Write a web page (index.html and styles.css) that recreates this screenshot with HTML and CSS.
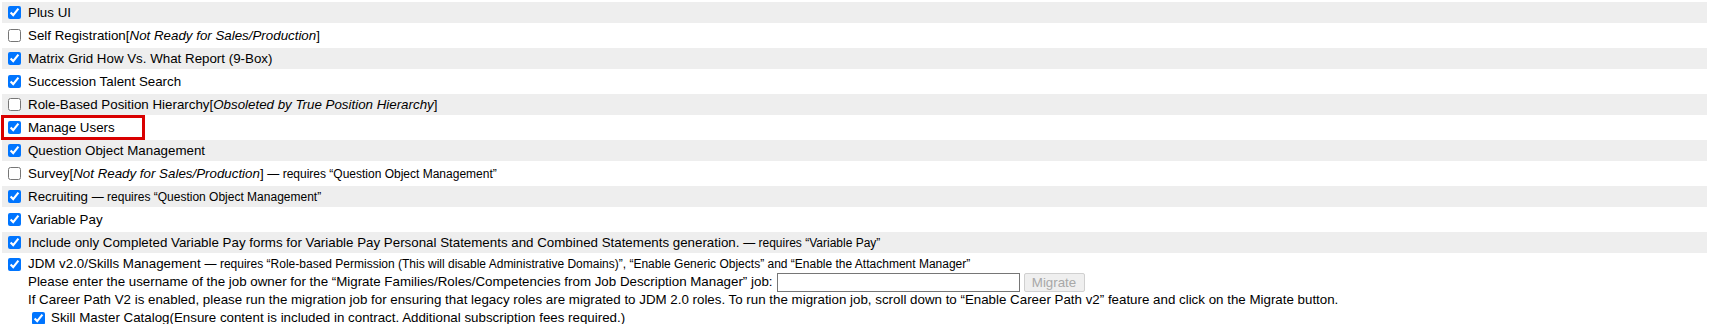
FILE: index.html
```html
<!DOCTYPE html>
<html lang="en">
<head>
<meta charset="utf-8">
<title>Feature settings</title>
<link rel="stylesheet" href="styles.css">
</head>
<body>
<table class="features">
  <tr class="alt"><td><label class="row"><input type="checkbox" checked><span>Plus UI</span></label></td></tr>
  <tr><td><label class="row"><input type="checkbox"><span>Self Registration[<i>Not Ready for Sales/Production</i>]</span></label></td></tr>
  <tr class="alt"><td><label class="row"><input type="checkbox" checked><span>Matrix Grid How Vs. What Report (9-Box)</span></label></td></tr>
  <tr><td><label class="row"><input type="checkbox" checked><span>Succession Talent Search</span></label></td></tr>
  <tr class="alt"><td><label class="row"><input type="checkbox"><span>Role-Based Position Hierarchy[<i>Obsoleted by True Position Hierarchy</i>]</span></label></td></tr>
  <tr><td><label class="row"><input type="checkbox" checked><span>Manage Users</span></label></td></tr>
  <tr class="alt"><td><label class="row"><input type="checkbox" checked><span>Question Object Management</span></label></td></tr>
  <tr><td><label class="row"><input type="checkbox"><span>Survey[<i>Not Ready for Sales/Production</i>] <span class="req">— requires “Question Object Management”</span></span></label></td></tr>
  <tr class="alt"><td><label class="row"><input type="checkbox" checked><span>Recruiting <span class="req">— requires “Question Object Management”</span></span></label></td></tr>
  <tr><td><label class="row"><input type="checkbox" checked><span>Variable Pay</span></label></td></tr>
  <tr class="alt"><td><label class="row"><input type="checkbox" checked><span>Include only Completed Variable Pay forms for Variable Pay Personal Statements and Combined Statements generation. <span class="req">— requires “Variable Pay”</span></span></label></td></tr>
  <tr><td class="top">
    <div class="row rowtop">
      <input type="checkbox" checked>
      <div class="lines">
        <div class="line">JDM v2.0/Skills Management <span class="req">— requires “Role-based Permission (This will disable Administrative Domains)”, “Enable Generic Objects” and “Enable the Attachment Manager”</span></div>
        <div class="line">Please enter the username of the job owner for the “Migrate Families/Roles/Competencies from Job Description Manager” job: <input type="text" class="user"><button type="button" class="migrate" disabled>Migrate</button></div>
        <div class="line">If Career Path V2 is enabled, please run the migration job for ensuring that legacy roles are migrated to JDM 2.0 roles. To run the migration job, scroll down to “Enable Career Path v2” feature and click on the Migrate button.</div>
        <label class="line sub"><input type="checkbox" checked><span>Skill Master Catalog(Ensure content is included in contract. Additional subscription fees required.)</span></label>
      </div>
    </div>
  </td></tr>
</table>
<div class="highlight"></div>
</body>
</html>
```
FILE: styles.css
```css
html {
  overflow: hidden;
}
body {
  margin: 0;
  font-family: "Liberation Sans", Arial, sans-serif;
  font-size: 13.33px;
  color: #000;
  background: #fff;
}
.features {
  width: 100%;
  border-collapse: separate;
  border-spacing: 2px;
}
.features td {
  padding: 0 1px;
  height: 21px;
  vertical-align: middle;
}
.features tr.alt td {
  background: #eee;
}
.row {
  display: flex;
  align-items: center;
}
.row > input[type="checkbox"] {
  width: 13px;
  height: 13px;
  margin: 0 7px 0 5px;
  flex: none;
}
.req {
  font-size: 12px;
}
.features td.top {
  vertical-align: top;
  height: auto;
}
.rowtop {
  align-items: flex-start;
}
.rowtop > input[type="checkbox"] {
  margin-top: 3px;
}
.lines {
  display: flex;
  flex-direction: column;
}
.line {
  height: 18px;
  line-height: 18px;
  white-space: nowrap;
  display: flex;
  align-items: center;
}
.line .req {
  margin-left: 4px;
}
.user {
  width: 243px;
  height: 19px;
  box-sizing: border-box;
  margin: 0 0 0 4px;
  padding: 1px 2px;
  border: 1px solid #767676;
  font: 13.33px "Liberation Sans", Arial, sans-serif;
}
.migrate {
  width: 61px;
  height: 19px;
  box-sizing: border-box;
  margin: 0 0 0 4px;
  padding: 0;
  border: 1px solid #d0d0d0;
  border-radius: 2px;
  background: #efefef;
  color: #a8a8a8;
  font: 13.33px "Liberation Sans", Arial, sans-serif;
}
.sub input[type="checkbox"] {
  width: 13px;
  height: 13px;
  margin: 0 6px 0 4px;
}
.highlight {
  position: absolute;
  left: 1px;
  top: 115px;
  width: 144px;
  height: 25px;
  box-sizing: border-box;
  border: 3px solid #d90000;
  pointer-events: none;
}
```
